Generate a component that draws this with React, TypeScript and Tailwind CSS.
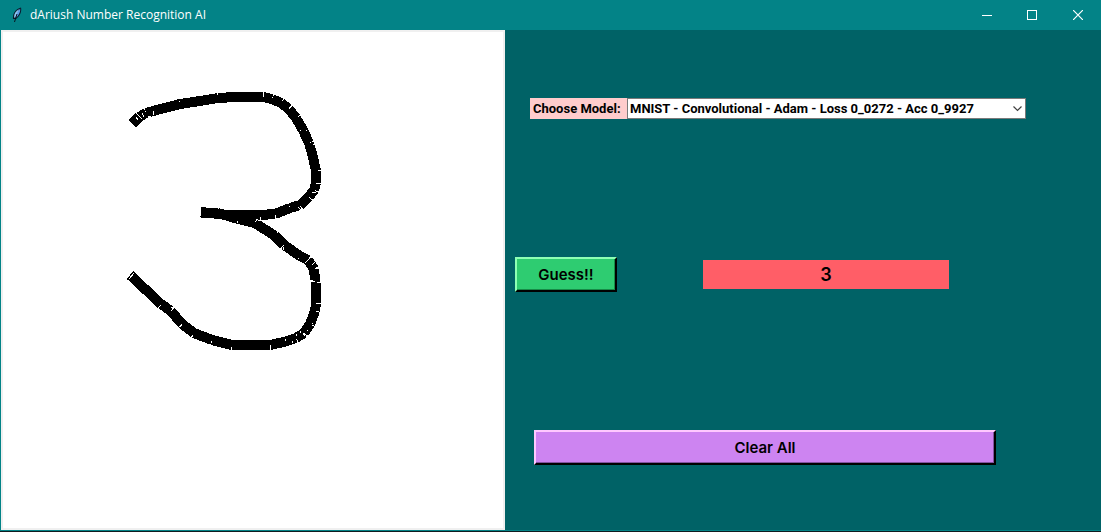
import { useState } from "react";

type Point = [number, number];

const upperStroke: Point[] = [
  [132, 124], [139, 117], [146, 113], [153, 111], [180, 104], [200, 101], [218, 98],
  [235, 97], [263, 97], [272, 99], [281, 103], [289, 109], [296, 118], [303, 130],
  [309, 143], [313, 157], [316, 171], [316, 183], [314, 190], [309, 197], [300, 205],
  [290, 208], [275, 214], [260, 215], [228, 215], [201, 212],
];

const lowerStroke: Point[] = [
  [201, 213], [218, 213], [238, 219], [255, 223], [275, 236], [284, 245], [300, 256],
  [308, 260], [314, 269], [315, 280], [316, 283], [316, 303], [315, 311], [310, 324],
  [304, 333], [296, 338], [284, 342], [270, 345], [232, 345], [212, 340], [194, 333],
  [182, 324], [171, 311], [161, 304], [145, 289], [130, 275],
];

const gaps =
  "M142 113l2 4M148 117l3-1M153 111v4M263 92v5M282 101l3-3M289 108l3-3M300 130h1M306 130h1M302 141h1M313 144h2M312 135h1M316 183h5M312 192h4M308 204l3 3M298 207l3 3M260 217v3M256 219l4 2M237 221v2M283 247v3M305 263l2-2M310 258l-3 3M312 265l3-3M310 281h5M316 303h5M312 323h1M307 330h1M303 333l2 3M300 331l1 2M296 334v2M292 341v2M285 339v2M270 345v5M211 341v2M180 327l2-2M171 307l3 2M159 307l2-2M127 277l6-6M129 279l5-6M136 117l2 3M138 115l4 4";

const models = [
  "MNIST - Convolutional - Adam - Loss 0_0272 - Acc 0_9927",
];

function segments(points: Point[]) {
  return points.slice(1).map(([x, y], i) => (
    <line key={i} x1={points[i][0]} y1={points[i][1]} x2={x} y2={y} />
  ));
}

function Feather() {
  return (
    <svg className="h-4 w-3" viewBox="0 0 12 16" aria-hidden="true">
      <path d="M2 12C1.500 7 4 2 10 .5c1 3.500-1 8.500-5 11.500z" fill="#0a1a2c" />
      <path d="M4.500 11C5 7 6.500 4 9.200 1.800c.3 3.200-1.200 6.700-4.700 9.200z" fill="#5b9be8" />
      <path d="M3 10.500C3 6.500 4.800 3.800 8 2.200L4.300 10.800z" fill="#8cc4f0" />
      <path d="M6 7L3.500 15" stroke="#08131d" fill="none" />
    </svg>
  );
}

export default function App() {
  const [guess, setGuess] = useState("3");
  const [drawn, setDrawn] = useState(true);

  return (
    <div className="flex min-h-screen flex-col border-b border-[#101c20] bg-[#038387] font-[Inter,sans-serif] text-black">
      <header className="flex h-[30px] items-center justify-between pl-[11px] text-white">
        <div className="flex items-center gap-[7px]">
          <Feather />
          <h1 className="font-['Open_Sans',sans-serif] text-xs">dAriush Number Recognition AI</h1>
        </div>
        <div className="flex h-full pb-px">
          <button aria-label="Minimize" className="flex w-[45px] items-center justify-center">
            <svg width="10" height="10" shapeRendering="crispEdges"><path d="M0 5.500h10" stroke="white" /></svg>
          </button>
          <button aria-label="Maximize" className="flex w-[46px] items-center justify-center">
            <svg width="10" height="10" shapeRendering="crispEdges"><path d="M.5.5h9v9h-9z" fill="none" stroke="white" /></svg>
          </button>
          <button aria-label="Close" className="flex w-[46px] items-center justify-center">
            <svg width="10" height="10"><path d="M0 0l10 10M10 0L0 10" stroke="white" strokeWidth="1.2" /></svg>
          </button>
        </div>
      </header>

      <main className="flex flex-1 border-b border-l border-[#038387]">
        <section aria-label="Drawing area" className="w-[504px] shrink-0 border-2 border-[#f0f0f0] bg-white">
          <svg className="block h-auto w-full" viewBox="3 32 500 496" shapeRendering="crispEdges" role="img" aria-label="Drawn digit">
            {drawn && (
              <>
                <g stroke="black" strokeWidth="10">
                  {segments(upperStroke)}
                  {segments(lowerStroke)}
                </g>
                <path d={gaps} stroke="white" strokeWidth="1" fill="none" />
              </>
            )}
          </svg>
        </section>

        <section className="flex flex-1 flex-col gap-[138px] bg-[#006266] pt-[68px]">
          <div className="mr-[75px] ml-[25px] flex h-[21px] font-[Roboto,sans-serif] text-[13px] font-bold">
            <label htmlFor="model" className="flex w-[97px] items-center bg-[#ffcccc] pl-[3px] whitespace-nowrap">
              Choose Model:
            </label>
            <div className="relative flex flex-1">
              <select id="model" className="w-full appearance-none border border-[#7a7a7a] bg-white pr-5 pl-0.5">
                {models.map((m) => <option key={m}>{m}</option>)}
              </select>
              <svg className="pointer-events-none absolute top-2 right-1" width="9" height="6" aria-hidden="true">
                <path d="M.5.5l4 4 4-4" fill="none" stroke="#404040" strokeWidth="1.2" />
              </svg>
            </div>
          </div>

          <div className="mr-[152px] ml-2.5 flex items-center gap-[86px]">
            <button
              onClick={() => setGuess(drawn ? "3" : "")}
              className="h-[35px] w-[102px] border-2 border-t-[#8dffb4] border-r-black border-b-black border-l-[#8dffb4] bg-[#2ecc71] pt-0.5 text-[15px] font-semibold shadow-[inset_-1px_-1px_0_#178c48]"
            >
              Guess!!
            </button>
            <output className="flex h-[29px] flex-1 items-center justify-center bg-[#ff5e67] text-lg font-semibold">{guess}</output>
          </div>

          <button
            onClick={() => { setDrawn(false); setGuess(""); }}
            className="mr-[105px] ml-[29px] h-[35px] border-2 border-t-[#ffc8ff] border-r-black border-b-black border-l-[#ffc8ff] bg-[#cd84f1] pt-0.5 text-[15px] font-semibold shadow-[inset_-1px_-1px_0_#8252a0]"
          >
            Clear All
          </button>
        </section>
      </main>
    </div>
  );
}
